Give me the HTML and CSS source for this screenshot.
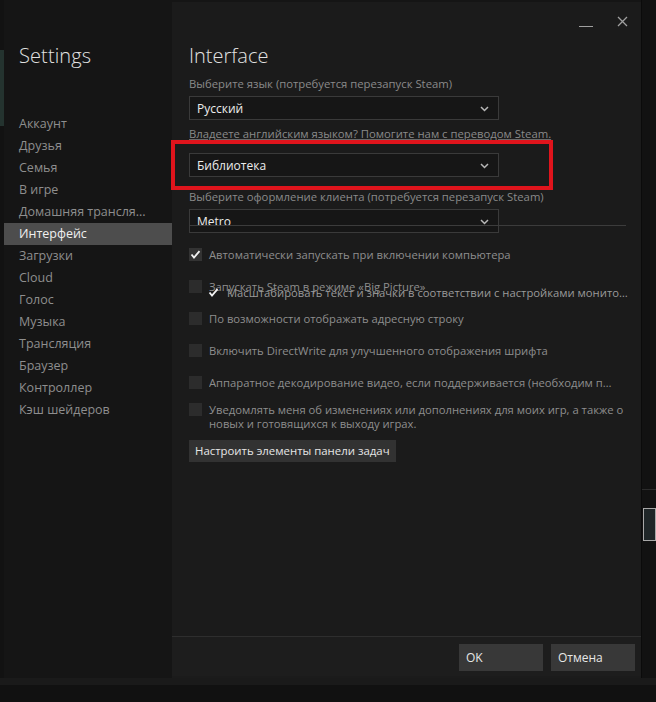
FILE: index.html
```html
<!DOCTYPE html>
<html lang="ru">
<head>
<meta charset="utf-8">
<title>Settings</title>
<link rel="stylesheet" href="styles.css">
</head>
<body>
<div class="screen">
  <div class="window">
    <div class="edge"><div class="edge-teal"></div></div>
    <aside class="sidebar">
      <h1 class="side-title">Settings</h1>
      <nav class="nav">
        <div class="nav-item">Аккаунт</div>
        <div class="nav-item">Друзья</div>
        <div class="nav-item">Семья</div>
        <div class="nav-item">В игре</div>
        <div class="nav-item">Домашняя трансля...</div>
        <div class="nav-item active">Интерфейс</div>
        <div class="nav-item">Загрузки</div>
        <div class="nav-item">Cloud</div>
        <div class="nav-item">Голос</div>
        <div class="nav-item">Музыка</div>
        <div class="nav-item">Трансляция</div>
        <div class="nav-item">Браузер</div>
        <div class="nav-item">Контроллер</div>
        <div class="nav-item">Кэш шейдеров</div>
      </nav>
    </aside>
    <main class="main">
      <div class="titlebar">
        <span class="minimize"></span>
        <svg class="close" width="11" height="11" viewBox="0 0 11 11"><path d="M1 1L10 10M10 1L1 10" stroke="#a0a0a0" stroke-width="1.3" fill="none"/></svg>
      </div>
      <div class="content">
        <h2 class="heading">Interface</h2>
        <div class="label">Выберите язык (потребуется перезапуск Steam)</div>
        <div class="select"><span>Русский</span><svg class="chev" width="9" height="6" viewBox="0 0 9 6"><path d="M1 1L4.5 4.5L8 1" stroke="#b8b8b8" stroke-width="1.5" fill="none"/></svg></div>
        <div class="link">Владеете английским языком? Помогите нам с переводом Steam.</div>
        <div class="select sel2"><span>Библиотека</span><svg class="chev" width="9" height="6" viewBox="0 0 9 6"><path d="M1 1L4.5 4.5L8 1" stroke="#b8b8b8" stroke-width="1.5" fill="none"/></svg></div>
        <div class="label label2">Выберите оформление клиента (потребуется перезапуск Steam)</div>
        <div class="select-wrap">
          <div class="select"><span>Metro</span><svg class="chev" width="9" height="6" viewBox="0 0 9 6"><path d="M1 1L4.5 4.5L8 1" stroke="#b8b8b8" stroke-width="1.5" fill="none"/></svg></div>
          <div class="glitch-line"></div>
        </div>
        <div class="checks">
          <div class="check-row">
            <span class="box checked"><svg width="11" height="9" viewBox="0 0 11 9"><path d="M1.5 4.5L4 7.5L9.5 1.2" stroke="#f2f2f2" stroke-width="1.8" fill="none"/></svg></span>
            <span class="check-text">Автоматически запускать при включении компьютера</span>
          </div>
          <div class="check-row">
            <span class="box"></span>
            <span class="check-text">Запускать Steam в режиме «Big Picture»</span>
            <div class="overlay-row">
              <span class="box checked"><svg width="11" height="9" viewBox="0 0 11 9"><path d="M1.5 4.5L4 7.5L9.5 1.2" stroke="#f2f2f2" stroke-width="1.8" fill="none"/></svg></span>
              <span class="check-text ellip">Масштабировать текст и значки в соответствии с настройками монитора</span>
            </div>
          </div>
          <div class="check-row">
            <span class="box"></span>
            <span class="check-text">По возможности отображать адресную строку</span>
          </div>
          <div class="check-row">
            <span class="box"></span>
            <span class="check-text">Включить DirectWrite для улучшенного отображения шрифта</span>
          </div>
          <div class="check-row tight">
            <span class="box"></span>
            <span class="check-text ellip narrow">Аппаратное декодирование видео, если поддерживается (необходим перезапуск)</span>
          </div>
          <div class="check-row multi">
            <span class="box"></span>
            <span class="check-text">Уведомлять меня об изменениях или дополнениях для моих игр, а также о новых и готовящихся к выходу играх.</span>
          </div>
        </div>
        <button class="btn-task">Настроить элементы панели задач</button>
      </div>
      <div class="footer">
        <button class="btn">OK</button>
        <button class="btn">Отмена</button>
      </div>
    </main>
    <div class="rstrip">
      <div class="rline"></div>
      <div class="rbox"></div>
    </div>
    <div class="annotation"></div>
  </div>
  <div class="bottom"></div>
</div>
</body>
</html>
```
FILE: styles.css
```css
* { box-sizing: border-box; }
html, body { margin: 0; padding: 0; }
body {
  background: #101010;
  font-family: "Open Sans", "Noto Sans", sans-serif;
  width: 656px;
  height: 702px;
  overflow: hidden;
}
.screen { display: flex; flex-direction: column; height: 702px; }
.window {
  position: relative;
  display: flex;
  height: 678px;
}
.edge {
  width: 4px;
  background: #121212;
  padding-top: 50px;
}
.edge-teal { height: 76px; background: #24332f; }
.sidebar {
  width: 168px;
  background: #151515;
  padding-top: 41px;
}
.side-title {
  margin: 0 0 0 15px;
  font-weight: 300;
  font-size: 20px;
  line-height: 30px;
  color: #e2e2e2;
  letter-spacing: 0.1px;
}
.nav { margin-top: 42px; }
.nav-item {
  height: 22px;
  line-height: 22px;
  padding-left: 15px;
  font-size: 12.5px;
  color: #8e8e8e;
  white-space: nowrap;
}
.nav-item.active { background: #4d4d4d; color: #f0f0f0; }
.main {
  width: 469px;
  background: #1b1b1b;
  border-top: 2px solid #151515;
  display: flex;
  flex-direction: column;
}
.titlebar {
  height: 36px;
  display: flex;
  justify-content: flex-end;
  align-items: center;
  gap: 24px;
  padding-right: 13px;
  padding-top: 2px;
}
.minimize {
  width: 14px;
  height: 1px;
  background: #a0a0a0;
  margin-top: 10px;
}
.content {
  flex: 1;
  padding-left: 17px;
  padding-right: 14px;
}
.heading {
  margin: 3px 0 0;
  font-weight: 300;
  font-size: 20px;
  line-height: 30px;
  color: #e2e2e2;
}
.label {
  margin-top: 5px;
  font-size: 11.3px;
  line-height: 16px;
  color: #8a8a8a;
  white-space: nowrap;
}
.label2 { margin-top: 12px; }
.select {
  margin-top: 4px;
  width: 310px;
  height: 24px;
  border: 1px solid #3a3a3a;
  background: #161616;
  display: flex;
  align-items: center;
  justify-content: space-between;
  padding: 0 9px 0 7px;
  font-size: 12px;
  font-weight: 500;
  color: #ececec;
}
.chev { margin-top: 1px; }
.link {
  margin-top: 6px;
  font-size: 11.3px;
  line-height: 16px;
  color: #8a8a8a;
  text-decoration: underline;
  text-decoration-color: #6a6a6a;
  white-space: nowrap;
}
.sel2 { margin-top: 11px; }
.select-wrap { position: relative; }
.glitch-line {
  position: absolute;
  left: 0;
  top: 16px;
  width: 437px;
  height: 1px;
  background: #3c3c3c;
}
.checks { margin-top: 15px; }
.check-row {
  position: relative;
  display: flex;
  align-items: flex-start;
  gap: 7px;
  margin-bottom: 18px;
}
.check-row.tight { margin-bottom: 13px; }
.check-row.multi { margin-bottom: 7px; }
.box {
  flex: none;
  width: 13px;
  height: 13px;
  background: #2c2c2c;
  display: flex;
  align-items: center;
  justify-content: center;
}
.box.checked { background: #333; }
.check-text {
  font-size: 11.25px;
  line-height: 14px;
  color: #8e8e8e;
  min-width: 0;
}
.check-text.ellip {
  white-space: nowrap;
  overflow: hidden;
  text-overflow: ellipsis;
}
.check-text.narrow { max-width: 407px; }
.overlay-row {
  position: absolute;
  left: 18px;
  top: 6px;
  right: -5px;
  display: flex;
  gap: 7px;
  align-items: flex-start;
}
.overlay-row .box { background: transparent; }
.overlay-row .check-text { color: #9a9a9a; }
.btn-task {
  font-family: inherit;
  height: 22px;
  padding: 0 6px;
  border: none;
  background: #323232;
  color: #e6e6e6;
  font-size: 11.4px;
}
.footer {
  height: 40px;
  border-top: 1px solid #2e2e2e;
  background: #1d1d1d;
  display: flex;
  justify-content: flex-end;
  gap: 8px;
  padding: 7px 6px 0 0;
  margin-bottom: 2px;
}
.btn {
  font-family: inherit;
  width: 84px;
  height: 27px;
  border: none;
  background: #383838;
  color: #e6e6e6;
  font-size: 12px;
  text-align: left;
  padding-left: 7px;
}
.rstrip {
  position: relative;
  flex: 1;
  background: #121212;
  border-left: 1px solid #0b0b0b;
}
.rline {
  position: absolute;
  left: 0; right: 0; top: 489px;
  height: 1px;
  background: #2c2c2c;
}
.rbox {
  position: absolute;
  left: 1px; top: 508px;
  width: 13px; height: 33px;
  border: 1px solid #a8a8a8;
  background: #1f2628;
}
.annotation {
  position: absolute;
  left: 171px;
  top: 140px;
  width: 382px;
  height: 50px;
  border: 4px solid #e0141c;
  pointer-events: none;
}
.bottom {
  height: 24px;
  background: #111;
  border-top: 7px solid #1a1a1a;
}
```
